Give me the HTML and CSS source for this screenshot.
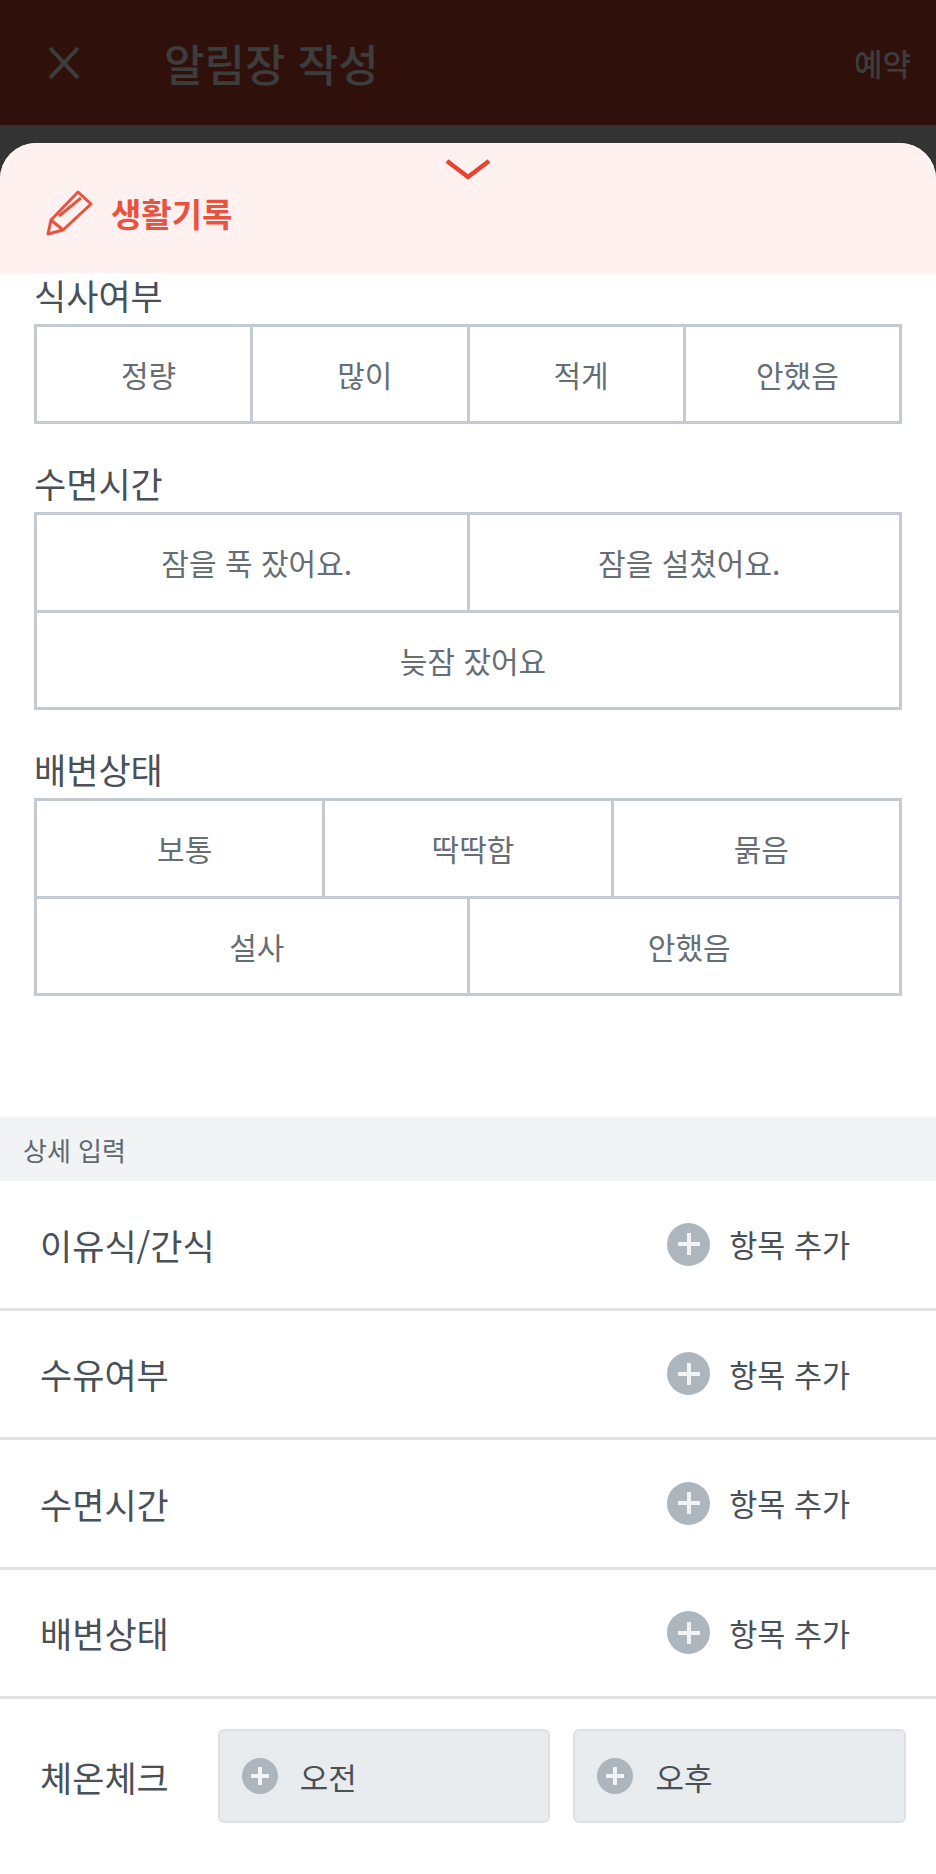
FILE: index.html
```html
<!DOCTYPE html>
<html lang="ko">
<head>
    <meta charset="UTF-8">
    <meta name="viewport" content="width=device-width, initial-scale=1.0">
    <title>알림장 작성</title>
    <link rel="stylesheet" href="styles.css">
</head>
<body>
    <header class="topbar">
        <svg class="topbar-close" width="36" height="36" viewBox="0 0 36 36"><path d="M4 3 L32 33 M32 3 L4 33" fill="none" stroke="#3d3d3d" stroke-width="4"/></svg>
        <h1 class="topbar-title">알림장 작성</h1>
        <span class="topbar-action">예약</span>
    </header>

    <div class="sheet">
        <div class="sheet-head">
            <svg class="sheet-chevron" width="46" height="22" viewBox="0 0 46 22"><path d="M2 3 L23 19 L44 3" fill="none" stroke="#e8432f" stroke-width="4.5"/></svg>
            <div class="sheet-title">
                <svg width="48" height="48" viewBox="0 0 48 48"><path d="M3 45 L6 31 L33 3 L46 15 L18 41 Z M6 31 L18 41 M14 27 L36 9" fill="none" stroke="#e8533f" stroke-width="3" stroke-linejoin="round"/></svg>
                <span>생활기록</span>
            </div>
        </div>

        <section class="records">
            <h2 class="field-label first">식사여부</h2>
            <div class="options cols-4">
                <div>정량</div><div>많이</div><div>적게</div><div>안했음</div>
            </div>

            <h2 class="field-label">수면시간</h2>
            <div class="options cols-2">
                <div>잠을 푹 잤어요.</div><div>잠을 설쳤어요.</div><div class="wide">늦잠 잤어요</div>
            </div>

            <h2 class="field-label">배변상태</h2>
            <div class="options cols-6">
                <div class="third">보통</div><div class="third">딱딱함</div><div class="third">묽음</div>
                <div class="half">설사</div><div class="half">안했음</div>
            </div>
        </section>

        <div class="section-bar">상세 입력</div>

        <div class="detail-row">
            <span class="detail-name">이유식/간식</span>
            <span class="add"><i class="plus"></i>항목 추가</span>
        </div>
        <div class="detail-row">
            <span class="detail-name">수유여부</span>
            <span class="add"><i class="plus"></i>항목 추가</span>
        </div>
        <div class="detail-row">
            <span class="detail-name">수면시간</span>
            <span class="add"><i class="plus"></i>항목 추가</span>
        </div>
        <div class="detail-row">
            <span class="detail-name">배변상태</span>
            <span class="add"><i class="plus"></i>항목 추가</span>
        </div>
        <div class="temp-row">
            <span class="detail-name">체온체크</span>
            <div class="temp-btn"><i class="plus small"></i>오전</div>
            <div class="temp-btn"><i class="plus small"></i>오후</div>
        </div>
    </div>
</body>
</html>
```

FILE: styles.css
```css
* {
    margin: 0;
    padding: 0;
    box-sizing: border-box;
}

body {
    width: 936px;
    height: 1874px;
    overflow: hidden;
    background: #333;
    font-family: "Noto Sans CJK KR", "Noto Sans", sans-serif;
    color: #495057;
}

/* top bar behind the dimmed layer */
.topbar {
    height: 125px;
    background: #2f100a;
    display: flex;
    align-items: center;
    padding: 0 25px 0 46px;
    color: #3d3d3d;
}

.topbar-title {
    margin-left: 82px;
    font-size: 44px;
    font-weight: 500;
    flex: 1;
}

.topbar-action {
    font-size: 31px;
    font-weight: 500;
}

/* bottom sheet */
.sheet {
    height: 1731px;
    margin-top: 18px;
    background: #fff;
    border-radius: 36px 36px 0 0;
    overflow: hidden;
}

.sheet-head {
    height: 130px;
    background: #fff1ef;
    padding-top: 15px;
}

.sheet-chevron {
    display: block;
    margin: 0 auto;
}

.sheet-title {
    display: flex;
    align-items: center;
    gap: 18px;
    margin-top: 9px;
    padding-left: 45px;
    color: #e8533f;
    font-size: 33px;
    font-weight: 700;
}

.records {
    display: flow-root;
    padding: 0 34px;
    height: 844px;
}

.field-label {
    font-size: 35px;
    font-weight: 400;
    line-height: 48px;
    margin: 35px 0 5px;
    color: #495057;
}

.field-label.first {
    margin-top: -2.5px;
}

.options {
    display: grid;
    width: 868px;
    border: solid #c3cad1;
    border-width: 3px 0 0 3px;
}

.options div {
    height: 97.5px;
    display: flex;
    align-items: center;
    justify-content: center;
    padding-left: 10px;
    border: solid #c3cad1;
    border-width: 0 3px 3px 0;
    font-size: 30px;
    color: #666d74;
}

.cols-4 { grid-template-columns: repeat(4, 1fr); }
.cols-2 { grid-template-columns: repeat(2, 1fr); }
.cols-6 { grid-template-columns: repeat(6, 1fr); }
.wide { grid-column: span 2; }
.third { grid-column: span 2; }
.half { grid-column: span 3; }

.section-bar {
    height: 64px;
    background: #f1f3f5;
    padding-left: 23px;
    display: flex;
    align-items: center;
    font-size: 26px;
    color: #5f6870;
}

.detail-row {
    height: 129.5px;
    display: flex;
    align-items: center;
    justify-content: space-between;
    padding: 0 86px 0 40px;
    border-bottom: 3px solid #e2e3e4;
}

.detail-name {
    font-size: 35px;
    color: #495057;
}

.add {
    display: flex;
    align-items: center;
    gap: 19px;
    font-size: 30.5px;
    color: #495057;
}

.plus {
    position: relative;
    display: block;
    width: 43px;
    height: 43px;
    border-radius: 50%;
    background: #adb5bd;
}

.plus::before,
.plus::after {
    content: "";
    position: absolute;
    top: 50%;
    left: 50%;
    background: #f1f3f5;
}

.plus::before {
    width: 22px;
    height: 4px;
    margin: -2px 0 0 -11px;
}

.plus::after {
    width: 4px;
    height: 22px;
    margin: -11px 0 0 -2px;
}

.plus.small {
    width: 36px;
    height: 36px;
}

.plus.small::before {
    width: 18px;
    margin-left: -9px;
}

.plus.small::after {
    height: 18px;
    margin-top: -9px;
}

.temp-row {
    display: flex;
    align-items: center;
    padding: 30px 30px 0 40px;
}

.temp-row .detail-name {
    width: 178px;
}

.temp-btn {
    width: 333px;
    height: 94px;
    margin-right: 23px;
    display: flex;
    align-items: center;
    gap: 22px;
    padding-left: 22px;
    background: #e9ecef;
    border: 2px solid #dee2e6;
    border-radius: 6px;
    font-size: 31px;
    color: #495057;
}

.temp-btn:last-child {
    margin-right: 0;
}
```
